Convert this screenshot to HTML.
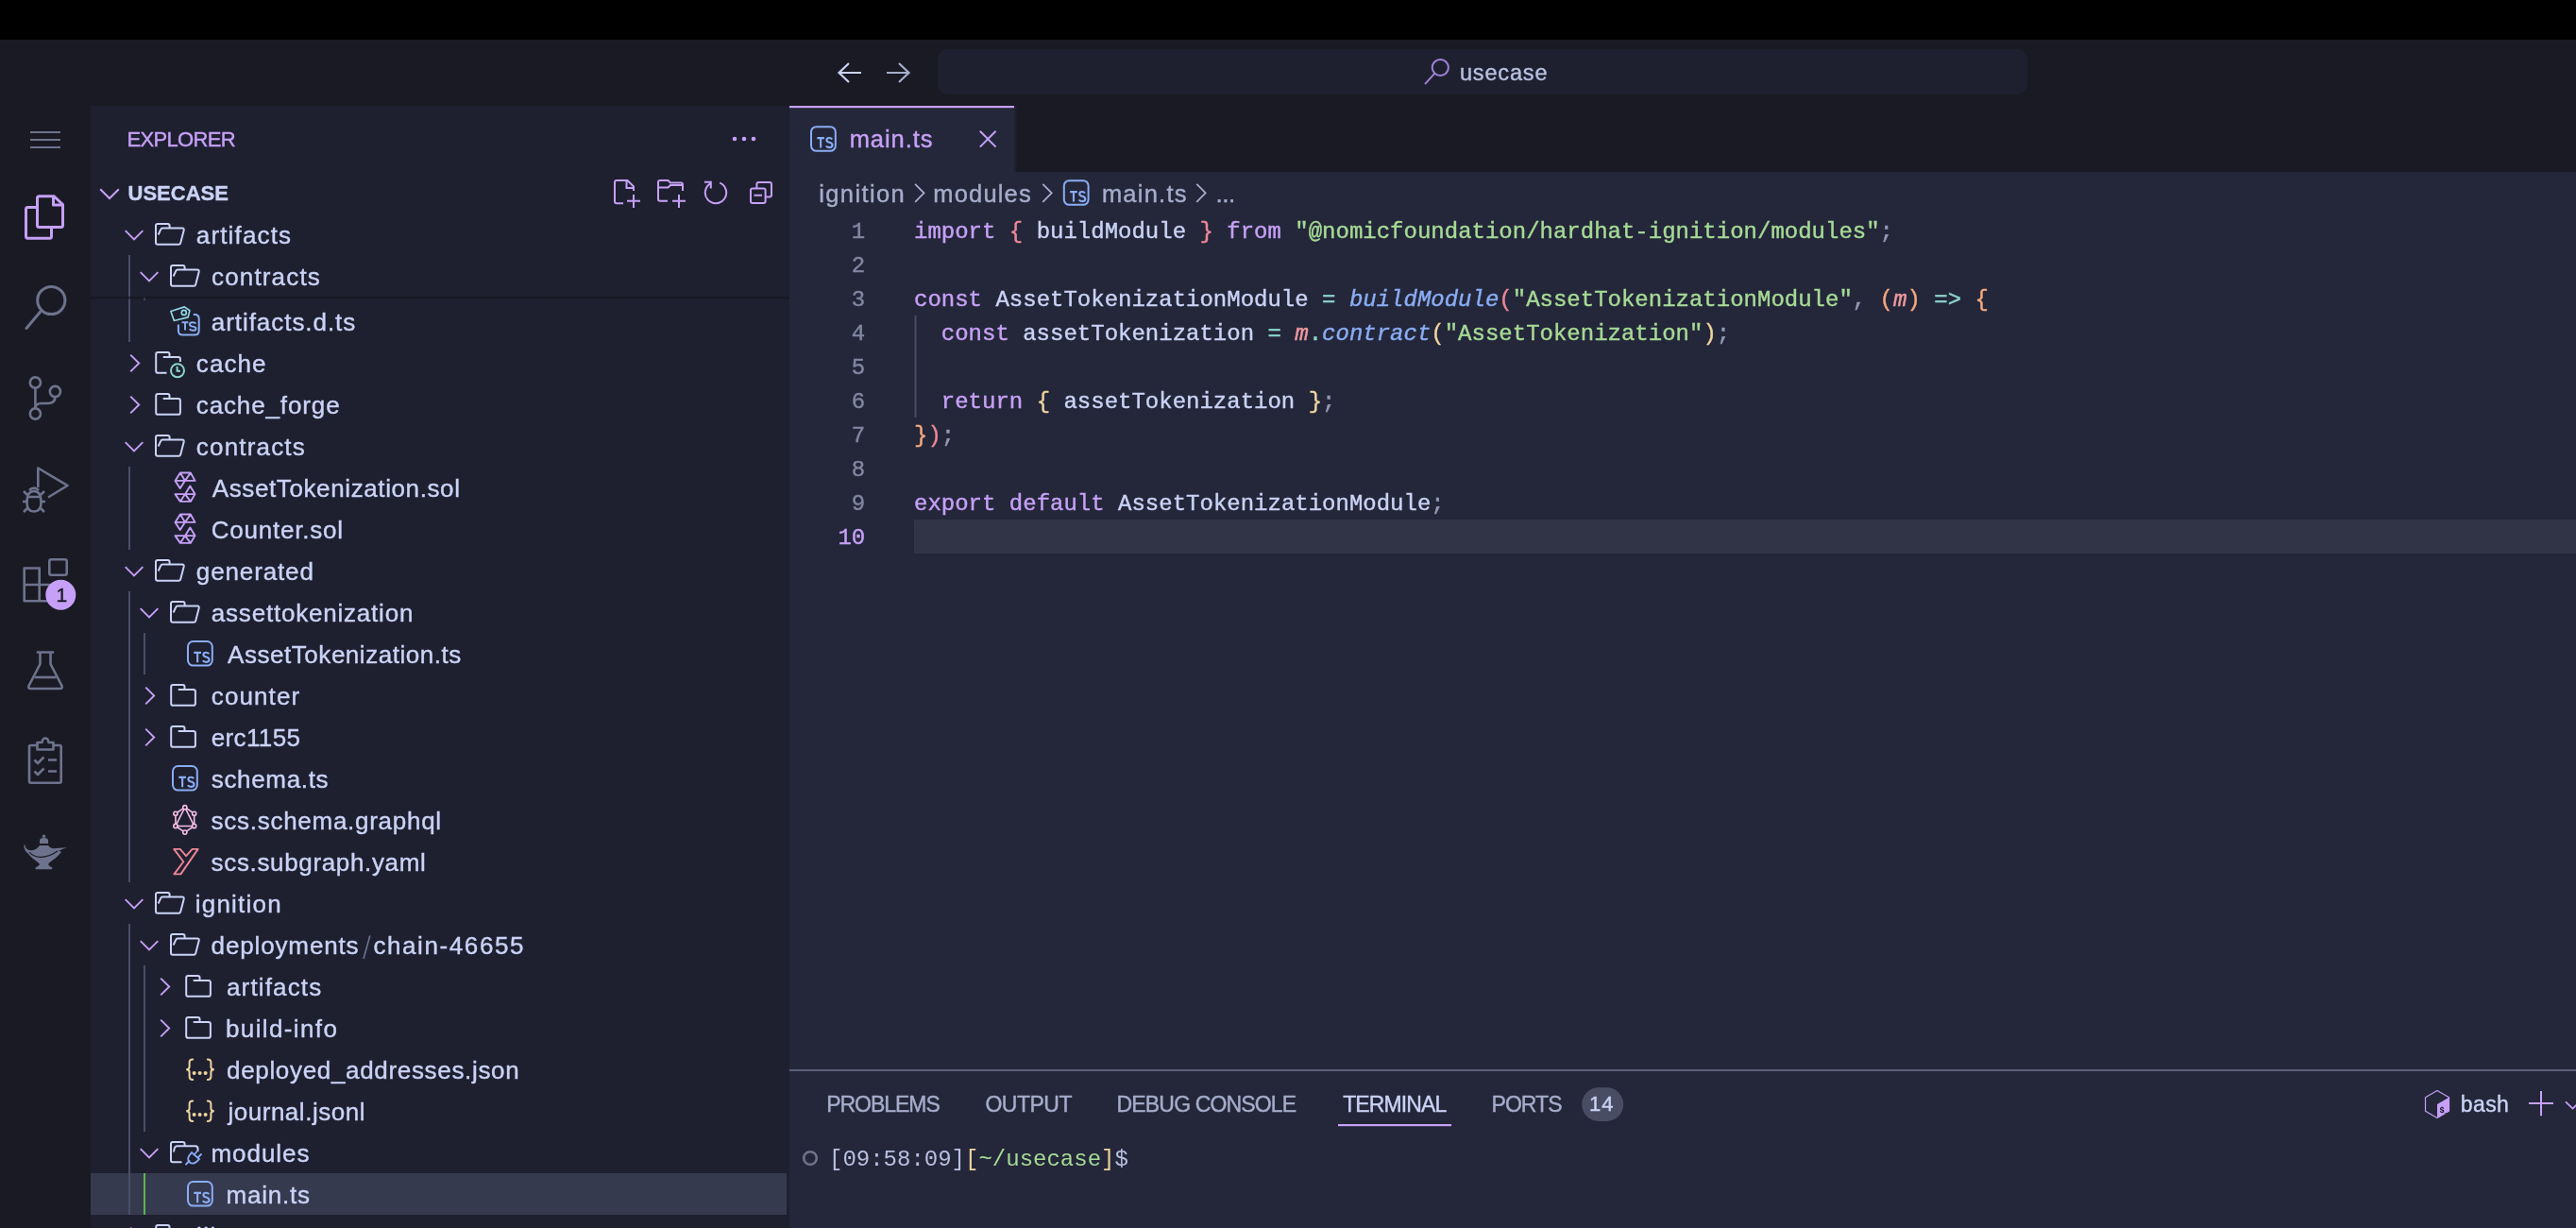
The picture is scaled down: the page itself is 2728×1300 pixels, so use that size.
<!DOCTYPE html>
<html><head><meta charset="utf-8"><title>VS Code</title>
<style>
html,body{margin:0;padding:0;background:#000;overflow:hidden;width:2728px;height:1300px}
svg{display:block;will-change:transform;font-family:"Liberation Sans",sans-serif}
text{white-space:pre;stroke-width:0.4px}
</style></head><body>
<svg width="2728" height="1300" viewBox="0 0 2728 1300">
<rect x="0" y="0" width="2728" height="42" fill="#000"/>
<rect x="0" y="42" width="2728" height="70" fill="#1a1a24"/>
<rect x="0" y="112" width="96" height="1188" fill="#1a1a24"/>
<rect x="96" y="112" width="740" height="1188" fill="#1e2030"/>
<rect x="836" y="112" width="1892" height="70" fill="#1a1a24"/>
<rect x="836" y="112" width="238" height="70" fill="#24273a"/>
<rect x="1074" y="112" width="2.6" height="70" fill="#1e2030"/>
<rect x="836" y="112" width="238" height="2.2" fill="#c6a0f6"/>
<rect x="836" y="182" width="1892" height="1118" fill="#24273a"/>
<rect x="993" y="52" width="1154" height="48" rx="11" fill="#1e2030"/>
<path d="M899 67 L888.5 77 L899 87 M888.5 77 H912" stroke="#cad3f5" stroke-width="2.2" fill="none"/>
<path d="M952 67 L962.5 77 L952 87 M962.5 77 H939" stroke="#a5adcb" stroke-width="2.2" fill="none"/>
<circle cx="1525.3" cy="71.5" r="8.6" stroke="#a383d6" stroke-width="2" fill="none"/>
<path d="M1519.2 77.8 L1509.6 88.4" stroke="#a383d6" stroke-width="2" stroke-linecap="round"/>
<path d="M32 140 H64 M32 148 H64 M32 156 H64" stroke="#6e738d" stroke-width="2"/>
<g stroke="#c6a0f6" stroke-width="3" fill="none" stroke-linejoin="round"><path d="M41.5 207.7 H57 L66.5 216.5 V238.5 Q66.5 240.5 64.5 240.5 H41.5 Q39.5 240.5 39.5 238.5 V209.7 Q39.5 207.7 41.5 207.7 Z"/><path d="M56.5 207.7 V217 H66.5"/><path d="M39.5 219.6 H29.5 Q27.5 219.6 27.5 221.6 V250.3 Q27.5 252.3 29.5 252.3 H52.5 Q54.5 252.3 54.5 250.3 V240.5"/></g>
<g stroke="#6e738d" stroke-width="3" fill="none"><circle cx="54.3" cy="318" r="14.6"/><path d="M44 328.5 L28 347.5" stroke-linecap="round"/></g>
<g stroke="#6e738d" stroke-width="2.6" fill="none"><circle cx="37.4" cy="405" r="5.6"/><circle cx="37.4" cy="438" r="5.6"/><circle cx="58.4" cy="414.5" r="5.6"/><path d="M37.4 410.6 V432.4"/><path d="M58.4 420.1 Q58.4 427 51 427 H44 Q37.4 427 37.4 432"/></g>
<g stroke="#6e738d" stroke-width="2.6" fill="none" stroke-linejoin="round"><path d="M40.3 516 V495.5 L71.5 514 L51 526.5"/><path d="M28.5 532 Q28.5 520 36 520 Q43.5 520 43.5 532 Q43.5 541.5 36 541.5 Q28.5 541.5 28.5 532 Z"/><path d="M28.5 526 H43.5 M24 531 H28.5 M43.5 531 H48 M25 520 L29 524 M47 520 L43 524 M25 542 L29 538 M47 542 L43 538 M31 519 Q36 514 41 519"/></g>
<g stroke="#6e738d" stroke-width="2.6" fill="none" stroke-linejoin="round"><path d="M25.7 601.5 H41.7 V636.3 H25.7 Z M25.7 619 H57 V636.3 H41.7"/><rect x="52.3" y="592.3" width="18.4" height="16.4" rx="2"/></g>
<circle cx="64.3" cy="629.7" r="16" fill="#c6a0f6"/>
<g stroke="#6e738d" stroke-width="2.6" fill="none" stroke-linejoin="round"><path d="M38.8 690.5 H57.2 M42.5 690.5 V703 L30.5 726 Q29.5 729 32.5 729 H63.5 Q66.5 729 65.5 726 L53.5 703 V690.5"/><path d="M36.5 717 H59.5"/></g>
<g stroke="#6e738d" stroke-width="2.6" fill="none" stroke-linejoin="round"><path d="M39.5 789 H32.5 Q31 789 31 790.5 V827 Q31 828.7 32.5 828.7 H63 Q64.7 828.7 64.7 827 V790.5 Q64.7 789 63 789 H56"/><path d="M39.5 793.5 V786 H44.5 Q45 781.5 48 781.5 Q51 781.5 51.5 786 H56.5 V793.5 Z"/><path d="M36.5 804.5 L40 808 L46.5 801.5 M36.5 816.5 L40 820 L46.5 813.5 M51 804.5 H60 M51 816.5 H60"/></g>
<g fill="#6e738d"><circle cx="46.5" cy="885.3" r="1.7"/><path d="M42 893 V889.8 Q42 887.6 44.3 887.3 Q46.5 886.9 48.7 887.3 Q51 887.6 51 889.8 V893 Z"/><path d="M42 894.9 H51 Q52.6 897.6 56 898.3 Q63 897.8 70.9 897.2 Q66.5 898.6 62.5 900.6 L64.9 902.2 Q60 908 53.5 912.3 Q51 913.6 51.2 915.6 Q52.5 917.9 55.2 918.3 V920.2 H37.6 V918.3 Q40.3 917.9 41.8 915.6 Q42 913.6 39.6 912.4 Q33.5 908.8 29.6 903.6 Q25.2 900.4 25.4 894.6 Q26.4 893.6 26.8 895.8 Q27.6 899.6 32 900.3 Q38.6 900 42 894.9 Z"/></g><path d="M31.2 902.3 Q36 907 42.5 907.4 Q52 907.6 61.2 900.8" stroke="#1a1a24" stroke-width="1.1" fill="none"/>
<circle cx="778" cy="147" r="2.3" fill="#c6a0f6"/>
<circle cx="788" cy="147" r="2.3" fill="#c6a0f6"/>
<circle cx="798" cy="147" r="2.3" fill="#c6a0f6"/>
<path d="M106.2 200.3 L116 210 L125.8 200.3" stroke="#c6a0f6" stroke-width="2" fill="none"/>
<g stroke="#c6a0f6" stroke-width="2" fill="none"><path d="M660 215.2 H653 Q651 215.2 651 213.2 V193 Q651 191 653 191 H664.5 L671 197.5 V202 M663.5 191 V199 H671 M671 206 V220 M664 212.8 H678"/><path d="M707 212.8 H699 Q697 212.8 697 210.8 V193 Q697 191 699 191 H707.5 L710 193.5 H721 Q723 193.5 723 195.5 V202 M697 198.5 H707.5 L710 196 H723 M719 206 V220 M712 212.8 H726"/><path d="M762.20 193.62 A11.2 11.2 0 1 1 752.74 194.11 M746 192.8 H752.8 V199.6"/><path d="M801.4 198.4 V195 Q801.4 193 803.4 193 H815 Q817 193 817 195 V206.6 Q817 208.6 815 208.6 H811.6 M797 199.4 H808.6 Q810.6 199.4 810.6 201.4 V213 Q810.6 215 808.6 215 H797 Q795 215 795 213 V201.4 Q795 199.4 797 199.4 Z M798.5 206.8 H807"/></g>
<rect x="96" y="1242" width="737" height="44" fill="#363a4f"/>
<rect x="136" y="270" width="2" height="92" fill="#4a4e66"/>
<rect x="136" y="494" width="2" height="88" fill="#4a4e66"/>
<rect x="136" y="626" width="2" height="308" fill="#4a4e66"/>
<rect x="136" y="978" width="2" height="308" fill="#4a4e66"/>
<rect x="152" y="670" width="2" height="44" fill="#4a4e66"/>
<rect x="152" y="1022" width="2" height="176" fill="#4a4e66"/>
<rect x="152" y="1242" width="2" height="44" fill="#5bb650"/>
<rect x="152" y="314" width="2" height="4" fill="#4a4e66"/>
<g transform="translate(180,318)" fill="none" stroke-linejoin="round"><g stroke="#91d7e3" stroke-width="1.7"><path d="M0.9 11.5 L15.3 6.9 L20.9 10.8 L19.1 17.9 L4.4 21.5 Z"/><circle cx="14.8" cy="12.9" r="2.5"/></g><g stroke="#8aadf4" stroke-width="2"><path d="M8.9 25.4 V32.1 Q8.9 36.6 13.4 36.6 H26.2 Q30.7 36.6 30.7 32.1 V19.5 Q30.7 15 26.2 15 H24.8"/><path d="M12.6 23.3 H19.4 M16 23.3 V31.5" stroke-width="1.9"/><path d="M27.4 24.6 Q26.6 23.2 24.2 23.2 Q20.9 23.2 20.9 25.5 Q20.9 27.2 24.1 27.6 Q27.6 28 27.6 29.9 Q27.6 31.8 24.2 31.8 Q21.6 31.8 20.6 30.3" stroke-width="1.9"/></g></g>
<path d="M138.2 375.6 L147.2 384.5 L138.2 393.4" stroke="#c6a0f6" stroke-width="1.9" fill="none"/>
<g transform="translate(164,362)" stroke="#cad3f5" stroke-width="2" fill="none" stroke-linejoin="round"><path d="M1.2 13.2 Q1.2 11.1 3.3 11.1 H13.5 Q15.5 11.1 15.5 13.1 V15.6"/><path d="M8.7 16 H24.8 Q26.9 16 26.9 18.1 V21 M12.5 32.8 H3.3 Q1.2 32.8 1.2 30.7 V13"/></g><g stroke="#8bd5ca" stroke-width="2" fill="none"><circle cx="188" cy="392.3" r="7"/><path d="M187.6 388 V392.8 H191"/></g>
<path d="M138.2 419.6 L147.2 428.5 L138.2 437.4" stroke="#c6a0f6" stroke-width="1.9" fill="none"/>
<g transform="translate(164,406)" stroke="#cad3f5" stroke-width="2" fill="none" stroke-linejoin="round"><path d="M1.2 13.2 Q1.2 11.1 3.3 11.1 H13.5 Q15.5 11.1 15.5 13.1 V15.6"/><path d="M8.7 16 H24.8 Q26.9 16 26.9 18.1 V30.7 Q26.9 32.8 24.8 32.8 H3.3 Q1.2 32.8 1.2 30.7 V13"/></g>
<path d="M132.7 468.2 L142 477.5 L151.3 468.2" stroke="#c6a0f6" stroke-width="1.9" fill="none"/>
<g transform="translate(164,450)" stroke="#cad3f5" stroke-width="2" fill="none" stroke-linejoin="round"><path d="M1 13 Q1 11 3 11 H13.6 Q15.6 11 15.6 13 V15.3"/><path d="M1 12.5 V30.8 Q1 32.8 3 32.8 H25.3 Q26.8 32.8 27.2 31.3 L30.7 17.8 Q31.1 15.6 29 15.6 H8.2 Q6.6 15.6 6.1 17.1 L3.6 22.5"/></g>
<g transform="translate(180,494)" stroke="#c6a0f6" stroke-width="1.9" fill="none" stroke-linejoin="round"><path d="M10.9 6.5 H21.8 L26.5 14.9 H5.5 Z M10.9 6.5 L16 14.9 L21.8 6.5 M5.5 14.9 L10.7 23.1 L15.8 14.9"/><path d="M5.5 29.1 H26.5 L21.8 36.9 H10.9 Z M10.9 36.9 L16 29.1 L21.8 36.9 M16.2 29.1 L21.3 20.6 L26.5 29.1"/></g>
<g transform="translate(180,538)" stroke="#c6a0f6" stroke-width="1.9" fill="none" stroke-linejoin="round"><path d="M10.9 6.5 H21.8 L26.5 14.9 H5.5 Z M10.9 6.5 L16 14.9 L21.8 6.5 M5.5 14.9 L10.7 23.1 L15.8 14.9"/><path d="M5.5 29.1 H26.5 L21.8 36.9 H10.9 Z M10.9 36.9 L16 29.1 L21.8 36.9 M16.2 29.1 L21.3 20.6 L26.5 29.1"/></g>
<path d="M132.7 600.2 L142 609.5 L151.3 600.2" stroke="#c6a0f6" stroke-width="1.9" fill="none"/>
<g transform="translate(164,582)" stroke="#cad3f5" stroke-width="2" fill="none" stroke-linejoin="round"><path d="M1 13 Q1 11 3 11 H13.6 Q15.6 11 15.6 13 V15.3"/><path d="M1 12.5 V30.8 Q1 32.8 3 32.8 H25.3 Q26.8 32.8 27.2 31.3 L30.7 17.8 Q31.1 15.6 29 15.6 H8.2 Q6.6 15.6 6.1 17.1 L3.6 22.5"/></g>
<path d="M148.7 644.2 L158 653.5 L167.3 644.2" stroke="#c6a0f6" stroke-width="1.9" fill="none"/>
<g transform="translate(180,626)" stroke="#cad3f5" stroke-width="2" fill="none" stroke-linejoin="round"><path d="M1 13 Q1 11 3 11 H13.6 Q15.6 11 15.6 13 V15.3"/><path d="M1 12.5 V30.8 Q1 32.8 3 32.8 H25.3 Q26.8 32.8 27.2 31.3 L30.7 17.8 Q31.1 15.6 29 15.6 H8.2 Q6.6 15.6 6.1 17.1 L3.6 22.5"/></g>
<g transform="translate(198,678)" fill="none" stroke="#8aadf4"><rect x="1" y="1" width="25.8" height="25.6" rx="5.5" stroke-width="2"/><path d="M7.3 12.9 H15 M11.15 12.9 V23.3" stroke-width="2.1"/><path d="M23.2 14.3 Q22.3 12.8 20.2 12.8 Q17.4 12.8 17.4 15.1 Q17.4 17 20.3 17.5 Q23.5 18.1 23.5 20.5 Q23.5 22.9 20.2 22.9 Q17.8 22.9 16.8 21.3" stroke-width="2.1"/></g>
<path d="M154.2 727.6 L163.2 736.5 L154.2 745.4" stroke="#c6a0f6" stroke-width="1.9" fill="none"/>
<g transform="translate(180,714)" stroke="#cad3f5" stroke-width="2" fill="none" stroke-linejoin="round"><path d="M1.2 13.2 Q1.2 11.1 3.3 11.1 H13.5 Q15.5 11.1 15.5 13.1 V15.6"/><path d="M8.7 16 H24.8 Q26.9 16 26.9 18.1 V30.7 Q26.9 32.8 24.8 32.8 H3.3 Q1.2 32.8 1.2 30.7 V13"/></g>
<path d="M154.2 771.6 L163.2 780.5 L154.2 789.4" stroke="#c6a0f6" stroke-width="1.9" fill="none"/>
<g transform="translate(180,758)" stroke="#cad3f5" stroke-width="2" fill="none" stroke-linejoin="round"><path d="M1.2 13.2 Q1.2 11.1 3.3 11.1 H13.5 Q15.5 11.1 15.5 13.1 V15.6"/><path d="M8.7 16 H24.8 Q26.9 16 26.9 18.1 V30.7 Q26.9 32.8 24.8 32.8 H3.3 Q1.2 32.8 1.2 30.7 V13"/></g>
<g transform="translate(182,810)" fill="none" stroke="#8aadf4"><rect x="1" y="1" width="25.8" height="25.6" rx="5.5" stroke-width="2"/><path d="M7.3 12.9 H15 M11.15 12.9 V23.3" stroke-width="2.1"/><path d="M23.2 14.3 Q22.3 12.8 20.2 12.8 Q17.4 12.8 17.4 15.1 Q17.4 17 20.3 17.5 Q23.5 18.1 23.5 20.5 Q23.5 22.9 20.2 22.9 Q17.8 22.9 16.8 21.3" stroke-width="2.1"/></g>
<g transform="translate(180,846)" stroke="#f5bde6" stroke-width="1.6" fill="none"><path d="M15.80 8.70 L25.67 15.30 L25.67 28.50 L15.80 35.10 L5.93 28.50 L5.93 15.30 Z"/><path d="M15.80 8.70 L25.67 28.50 L5.93 28.50 Z"/><circle cx="15.80" cy="8.70" r="2.1" fill="#1e2030"/><circle cx="25.67" cy="15.30" r="2.1" fill="#1e2030"/><circle cx="25.67" cy="28.50" r="2.1" fill="#1e2030"/><circle cx="15.80" cy="35.10" r="2.1" fill="#1e2030"/><circle cx="5.93" cy="28.50" r="2.1" fill="#1e2030"/><circle cx="5.93" cy="15.30" r="2.1" fill="#1e2030"/></g>
<g transform="translate(180,890)" stroke="#ed8796" stroke-width="1.9" fill="none" stroke-linejoin="round"><path d="M4.2 8.9 H10.7 L17.1 16.2 L23.6 8.9 H29.7 L11.4 35.4 H4.4 L14.3 22.3 Z"/></g>
<path d="M132.7 952.2 L142 961.5 L151.3 952.2" stroke="#c6a0f6" stroke-width="1.9" fill="none"/>
<g transform="translate(164,934)" stroke="#cad3f5" stroke-width="2" fill="none" stroke-linejoin="round"><path d="M1 13 Q1 11 3 11 H13.6 Q15.6 11 15.6 13 V15.3"/><path d="M1 12.5 V30.8 Q1 32.8 3 32.8 H25.3 Q26.8 32.8 27.2 31.3 L30.7 17.8 Q31.1 15.6 29 15.6 H8.2 Q6.6 15.6 6.1 17.1 L3.6 22.5"/></g>
<path d="M148.7 996.2 L158 1005.5 L167.3 996.2" stroke="#c6a0f6" stroke-width="1.9" fill="none"/>
<g transform="translate(180,978)" stroke="#cad3f5" stroke-width="2" fill="none" stroke-linejoin="round"><path d="M1 13 Q1 11 3 11 H13.6 Q15.6 11 15.6 13 V15.3"/><path d="M1 12.5 V30.8 Q1 32.8 3 32.8 H25.3 Q26.8 32.8 27.2 31.3 L30.7 17.8 Q31.1 15.6 29 15.6 H8.2 Q6.6 15.6 6.1 17.1 L3.6 22.5"/></g>
<path d="M170.2 1035.6 L179.2 1044.5 L170.2 1053.4" stroke="#c6a0f6" stroke-width="1.9" fill="none"/>
<g transform="translate(196,1022)" stroke="#cad3f5" stroke-width="2" fill="none" stroke-linejoin="round"><path d="M1.2 13.2 Q1.2 11.1 3.3 11.1 H13.5 Q15.5 11.1 15.5 13.1 V15.6"/><path d="M8.7 16 H24.8 Q26.9 16 26.9 18.1 V30.7 Q26.9 32.8 24.8 32.8 H3.3 Q1.2 32.8 1.2 30.7 V13"/></g>
<path d="M170.2 1079.6 L179.2 1088.5 L170.2 1097.4" stroke="#c6a0f6" stroke-width="1.9" fill="none"/>
<g transform="translate(196,1066)" stroke="#cad3f5" stroke-width="2" fill="none" stroke-linejoin="round"><path d="M1.2 13.2 Q1.2 11.1 3.3 11.1 H13.5 Q15.5 11.1 15.5 13.1 V15.6"/><path d="M8.7 16 H24.8 Q26.9 16 26.9 18.1 V30.7 Q26.9 32.8 24.8 32.8 H3.3 Q1.2 32.8 1.2 30.7 V13"/></g>
<g transform="translate(196,1110)" stroke="#eed49f" stroke-width="2" fill="none" stroke-linecap="round"><path d="M8.2 11.4 Q4.6 11.4 4.6 14.8 V19.6 Q4.6 22.3 1.2 22.3 Q4.6 22.3 4.6 25 V29.8 Q4.6 33 8.2 33"/><path d="M23.8 11.4 Q27.4 11.4 27.4 14.8 V19.6 Q27.4 22.3 30.8 22.3 Q27.4 22.3 27.4 25 V29.8 Q27.4 33 23.8 33"/></g><g fill="#eed49f"><circle cx="205.6" cy="1135.9" r="2"/><circle cx="211.6" cy="1135.9" r="2"/><circle cx="217.6" cy="1135.9" r="2"/></g>
<g transform="translate(196,1154)" stroke="#eed49f" stroke-width="2" fill="none" stroke-linecap="round"><path d="M8.2 11.4 Q4.6 11.4 4.6 14.8 V19.6 Q4.6 22.3 1.2 22.3 Q4.6 22.3 4.6 25 V29.8 Q4.6 33 8.2 33"/><path d="M23.8 11.4 Q27.4 11.4 27.4 14.8 V19.6 Q27.4 22.3 30.8 22.3 Q27.4 22.3 27.4 25 V29.8 Q27.4 33 23.8 33"/></g><g fill="#eed49f"><circle cx="205.6" cy="1179.9" r="2"/><circle cx="211.6" cy="1179.9" r="2"/><circle cx="217.6" cy="1179.9" r="2"/></g>
<path d="M148.7 1216.2 L158 1225.5 L167.3 1216.2" stroke="#c6a0f6" stroke-width="1.9" fill="none"/>
<g transform="translate(180,1198)" stroke="#cad3f5" stroke-width="2" fill="none" stroke-linejoin="round"><path d="M1 13 Q1 11 3 11 H13.6 Q15.6 11 15.6 13 V15"/><path d="M12.5 32.3 H3 Q1 32.3 1 30.3 V12.5 M4 21.5 Q4.5 15.2 7.5 15.2 H27 Q29.5 15.2 29.5 17.7 V21"/></g><g stroke="#8aadf4" stroke-width="1.8" fill="none" stroke-linecap="round"><path d="M197 1232.5 L200.5 1229"/><path d="M200 1224 Q198 1228 201 1230.5 Q204 1233 208 1230 L211 1227 L203 1220 Z"/><path d="M206 1222 L209 1218.5 M209.5 1225.5 L213 1222"/></g>
<g transform="translate(198,1250)" fill="none" stroke="#8aadf4"><rect x="1" y="1" width="25.8" height="25.6" rx="5.5" stroke-width="2"/><path d="M7.3 12.9 H15 M11.15 12.9 V23.3" stroke-width="2.1"/><path d="M23.2 14.3 Q22.3 12.8 20.2 12.8 Q17.4 12.8 17.4 15.1 Q17.4 17 20.3 17.5 Q23.5 18.1 23.5 20.5 Q23.5 22.9 20.2 22.9 Q17.8 22.9 16.8 21.3" stroke-width="2.1"/></g>
<path d="M138.2 1299.6 L147.2 1308.5 L138.2 1317.4" stroke="#c6a0f6" stroke-width="1.9" fill="none"/>
<g transform="translate(164,1286)" stroke="#cad3f5" stroke-width="2" fill="none" stroke-linejoin="round"><path d="M1.2 13.2 Q1.2 11.1 3.3 11.1 H13.5 Q15.5 11.1 15.5 13.1 V15.6"/><path d="M8.7 16 H24.8 Q26.9 16 26.9 18.1 V30.7 Q26.9 32.8 24.8 32.8 H3.3 Q1.2 32.8 1.2 30.7 V13"/></g>
<path d="M391.8 990.5 L385 1015" stroke="#6e738d" stroke-width="1.6"/>
<rect x="96" y="226" width="740" height="88" fill="#1e2030"/>
<path d="M132.7 244.2 L142 253.5 L151.3 244.2" stroke="#c6a0f6" stroke-width="1.9" fill="none"/>
<g transform="translate(164,226)" stroke="#cad3f5" stroke-width="2" fill="none" stroke-linejoin="round"><path d="M1 13 Q1 11 3 11 H13.6 Q15.6 11 15.6 13 V15.3"/><path d="M1 12.5 V30.8 Q1 32.8 3 32.8 H25.3 Q26.8 32.8 27.2 31.3 L30.7 17.8 Q31.1 15.6 29 15.6 H8.2 Q6.6 15.6 6.1 17.1 L3.6 22.5"/></g>
<path d="M148.7 288.2 L158 297.5 L167.3 288.2" stroke="#c6a0f6" stroke-width="1.9" fill="none"/>
<g transform="translate(180,270)" stroke="#cad3f5" stroke-width="2" fill="none" stroke-linejoin="round"><path d="M1 13 Q1 11 3 11 H13.6 Q15.6 11 15.6 13 V15.3"/><path d="M1 12.5 V30.8 Q1 32.8 3 32.8 H25.3 Q26.8 32.8 27.2 31.3 L30.7 17.8 Q31.1 15.6 29 15.6 H8.2 Q6.6 15.6 6.1 17.1 L3.6 22.5"/></g>
<rect x="136" y="270" width="2" height="44" fill="#4a4e66"/>
<linearGradient id="shd" x1="0" y1="0" x2="0" y2="1"><stop offset="0" stop-color="#14151f" stop-opacity="0.9"/><stop offset="1" stop-color="#14151f" stop-opacity="0"/></linearGradient>
<rect x="96" y="314" width="740" height="4" fill="url(#shd)"/>
<g transform="translate(858,133.2)" fill="none" stroke="#8aadf4"><rect x="1" y="1" width="25.8" height="25.6" rx="5.5" stroke-width="2"/><path d="M7.3 12.9 H15 M11.15 12.9 V23.3" stroke-width="2.1"/><path d="M23.2 14.3 Q22.3 12.8 20.2 12.8 Q17.4 12.8 17.4 15.1 Q17.4 17 20.3 17.5 Q23.5 18.1 23.5 20.5 Q23.5 22.9 20.2 22.9 Q17.8 22.9 16.8 21.3" stroke-width="2.1"/></g>
<path d="M1037.8 138.8 L1054.6 155.6 M1054.6 138.8 L1037.8 155.6" stroke="#c6a0f6" stroke-width="2" fill="none"/>
<path d="M969.1 194.8 L978.5 204.3 L969.1 213.8" stroke="#a5adcb" stroke-width="1.8" fill="none"/>
<path d="M1104.3 194.8 L1113.7 204.3 L1104.3 213.8" stroke="#a5adcb" stroke-width="1.8" fill="none"/>
<g transform="translate(1125.8,190.2)" fill="none" stroke="#8aadf4"><rect x="1" y="1" width="25.8" height="25.6" rx="5.5" stroke-width="2"/><path d="M7.3 12.9 H15 M11.15 12.9 V23.3" stroke-width="2.1"/><path d="M23.2 14.3 Q22.3 12.8 20.2 12.8 Q17.4 12.8 17.4 15.1 Q17.4 17 20.3 17.5 Q23.5 18.1 23.5 20.5 Q23.5 22.9 20.2 22.9 Q17.8 22.9 16.8 21.3" stroke-width="2.1"/></g>
<path d="M1267.3 194.8 L1276.7 204.3 L1267.3 213.8" stroke="#a5adcb" stroke-width="1.8" fill="none"/>
<rect x="968" y="550" width="1760" height="36" fill="#313446"/>
<rect x="968.5" y="334" width="2" height="108" fill="#494d64"/>
<rect x="836" y="1132" width="1892" height="2" fill="#5b6078"/>
<rect x="1417" y="1190" width="120" height="2.2" fill="#c6a0f6"/>
<rect x="1675.2" y="1151.2" width="44" height="35.7" rx="17.85" fill="#494d64"/>
<circle cx="858" cy="1226" r="6.8" stroke="#6e738d" stroke-width="2.6" fill="none"/>
<text x="878" y="1234" font-family='"Liberation Mono"' font-size="24" xml:space="preserve"><tspan fill="#b8c0e0">[09:58:09]</tspan><tspan fill="#eed49f">[</tspan><tspan fill="#a6da95">~/usecase</tspan><tspan fill="#eed49f">]</tspan><tspan fill="#b8c0e0">$</tspan></text>
<g stroke="#c6a0f6" stroke-width="1.2" fill="none" stroke-linejoin="round"><path d="M2581 1154.5 L2593.5 1161.7 V1176.3 L2581 1183.5 L2568.5 1176.3 V1161.7 Z"/></g>
<path d="M2593.5 1161.7 V1176.3 L2581 1183.5 V1169 Z" fill="#c6a0f6"/>
<text x="2583.5" y="1178" font-family='"Liberation Mono"' font-size="8.5" font-weight="bold" fill="#1a1a24">$_</text>
<path d="M2691 1155 V1181.2 M2678 1168 H2704" stroke="#c6a0f6" stroke-width="2" fill="none"/>
<path d="M2717 1166.3 L2724.5 1173.6 L2732 1166.3" stroke="#c6a0f6" stroke-width="1.8" fill="none"/>
<text x="968.00" y="252" font-family='"Liberation Mono"' font-size="24" xml:space="preserve"><tspan fill="#c6a0f6" stroke="#c6a0f6">import</tspan><tspan fill="#cad3f5" stroke="#cad3f5"> </tspan><tspan fill="#ed8796" stroke="#ed8796">{</tspan><tspan fill="#cad3f5" stroke="#cad3f5"> buildModule </tspan><tspan fill="#ed8796" stroke="#ed8796">}</tspan><tspan fill="#cad3f5" stroke="#cad3f5"> </tspan><tspan fill="#c6a0f6" stroke="#c6a0f6">from</tspan><tspan fill="#cad3f5" stroke="#cad3f5"> </tspan><tspan fill="#a6da95" stroke="#a6da95">"@nomicfoundation/hardhat-ignition/modules"</tspan><tspan fill="#939ab7" stroke="#939ab7">;</tspan></text>
<text x="968.00" y="324" font-family='"Liberation Mono"' font-size="24" xml:space="preserve"><tspan fill="#c6a0f6" stroke="#c6a0f6">const</tspan><tspan fill="#cad3f5" stroke="#cad3f5"> AssetTokenizationModule </tspan><tspan fill="#8bd5ca" stroke="#8bd5ca">=</tspan><tspan fill="#cad3f5" stroke="#cad3f5"> </tspan><tspan fill="#8aadf4" stroke="#8aadf4" font-style="italic">buildModule</tspan><tspan fill="#ed8796" stroke="#ed8796">(</tspan><tspan fill="#a6da95" stroke="#a6da95">"AssetTokenizationModule"</tspan><tspan fill="#939ab7" stroke="#939ab7">,</tspan><tspan fill="#cad3f5" stroke="#cad3f5"> </tspan><tspan fill="#f5a97f" stroke="#f5a97f">(</tspan><tspan fill="#ee99a0" stroke="#ee99a0" font-style="italic">m</tspan><tspan fill="#f5a97f" stroke="#f5a97f">)</tspan><tspan fill="#cad3f5" stroke="#cad3f5"> </tspan><tspan fill="#8bd5ca" stroke="#8bd5ca">=&gt;</tspan><tspan fill="#cad3f5" stroke="#cad3f5"> </tspan><tspan fill="#f5a97f" stroke="#f5a97f">{</tspan></text>
<text x="996.80" y="360" font-family='"Liberation Mono"' font-size="24" xml:space="preserve"><tspan fill="#c6a0f6" stroke="#c6a0f6">const</tspan><tspan fill="#cad3f5" stroke="#cad3f5"> assetTokenization </tspan><tspan fill="#8bd5ca" stroke="#8bd5ca">=</tspan><tspan fill="#cad3f5" stroke="#cad3f5"> </tspan><tspan fill="#ee99a0" stroke="#ee99a0" font-style="italic">m</tspan><tspan fill="#8bd5ca" stroke="#8bd5ca">.</tspan><tspan fill="#8aadf4" stroke="#8aadf4" font-style="italic">contract</tspan><tspan fill="#eed49f" stroke="#eed49f">(</tspan><tspan fill="#a6da95" stroke="#a6da95">"AssetTokenization"</tspan><tspan fill="#eed49f" stroke="#eed49f">)</tspan><tspan fill="#939ab7" stroke="#939ab7">;</tspan></text>
<text x="996.80" y="432" font-family='"Liberation Mono"' font-size="24" xml:space="preserve"><tspan fill="#c6a0f6" stroke="#c6a0f6">return</tspan><tspan fill="#cad3f5" stroke="#cad3f5"> </tspan><tspan fill="#eed49f" stroke="#eed49f">{</tspan><tspan fill="#cad3f5" stroke="#cad3f5"> assetTokenization </tspan><tspan fill="#eed49f" stroke="#eed49f">}</tspan><tspan fill="#939ab7" stroke="#939ab7">;</tspan></text>
<text x="968.00" y="468" font-family='"Liberation Mono"' font-size="24" xml:space="preserve"><tspan fill="#f5a97f" stroke="#f5a97f">}</tspan><tspan fill="#ed8796" stroke="#ed8796">)</tspan><tspan fill="#939ab7" stroke="#939ab7">;</tspan></text>
<text x="968.00" y="540" font-family='"Liberation Mono"' font-size="24" xml:space="preserve"><tspan fill="#c6a0f6" stroke="#c6a0f6">export</tspan><tspan fill="#cad3f5" stroke="#cad3f5"> </tspan><tspan fill="#c6a0f6" stroke="#c6a0f6">default</tspan><tspan fill="#cad3f5" stroke="#cad3f5"> AssetTokenizationModule</tspan><tspan fill="#939ab7" stroke="#939ab7">;</tspan></text>
<text x="1545.90" y="84.90" fill="#b8c0e0" stroke="#b8c0e0" font-size="23.5" letter-spacing="0.850">usecase</text>
<text x="59.60" y="637.30" fill="#1a1a24" stroke="#1a1a24" font-size="21" stroke-width="0.9">1</text>
<text x="134.50" y="155.00" fill="#c6a0f6" stroke="#c6a0f6" font-size="22" letter-spacing="-0.671" stroke-width="0.2">EXPLORER</text>
<text x="135.50" y="212.00" fill="#cad3f5" stroke="#cad3f5" font-size="22" font-weight="bold" letter-spacing="0.017">USECASE</text>
<text x="223.80" y="349.80" fill="#cad3f5" stroke="#cad3f5" font-size="26" letter-spacing="0.946">artifacts.d.ts</text>
<text x="207.80" y="393.80" fill="#cad3f5" stroke="#cad3f5" font-size="26" letter-spacing="1.100">cache</text>
<text x="207.80" y="437.80" fill="#cad3f5" stroke="#cad3f5" font-size="26" letter-spacing="0.870">cache_forge</text>
<text x="207.80" y="481.80" fill="#cad3f5" stroke="#cad3f5" font-size="26" letter-spacing="1.188">contracts</text>
<text x="224.80" y="525.80" fill="#cad3f5" stroke="#cad3f5" font-size="26" letter-spacing="0.605">AssetTokenization.sol</text>
<text x="223.80" y="569.80" fill="#cad3f5" stroke="#cad3f5" font-size="26" letter-spacing="0.760">Counter.sol</text>
<text x="207.80" y="613.80" fill="#cad3f5" stroke="#cad3f5" font-size="26" letter-spacing="0.875">generated</text>
<text x="223.80" y="657.80" fill="#cad3f5" stroke="#cad3f5" font-size="26" letter-spacing="0.794">assettokenization</text>
<text x="241.10" y="701.80" fill="#cad3f5" stroke="#cad3f5" font-size="26" letter-spacing="0.537">AssetTokenization.ts</text>
<text x="223.80" y="745.80" fill="#cad3f5" stroke="#cad3f5" font-size="26" letter-spacing="1.100">counter</text>
<text x="223.80" y="789.80" fill="#cad3f5" stroke="#cad3f5" font-size="26" letter-spacing="0.350">erc1155</text>
<text x="223.80" y="833.80" fill="#cad3f5" stroke="#cad3f5" font-size="26" letter-spacing="0.662">schema.ts</text>
<text x="223.60" y="877.80" fill="#cad3f5" stroke="#cad3f5" font-size="26" letter-spacing="0.724">scs.schema.graphql</text>
<text x="223.60" y="921.80" fill="#cad3f5" stroke="#cad3f5" font-size="26" letter-spacing="0.650">scs.subgraph.yaml</text>
<text x="206.70" y="965.80" fill="#cad3f5" stroke="#cad3f5" font-size="26" letter-spacing="1.229">ignition</text>
<text x="240.00" y="1053.80" fill="#cad3f5" stroke="#cad3f5" font-size="26" letter-spacing="1.150">artifacts</text>
<text x="239.00" y="1097.80" fill="#cad3f5" stroke="#cad3f5" font-size="26" letter-spacing="1.378">build-info</text>
<text x="240.00" y="1141.80" fill="#cad3f5" stroke="#cad3f5" font-size="26" letter-spacing="0.673">deployed_addresses.json</text>
<text x="241.40" y="1185.80" fill="#cad3f5" stroke="#cad3f5" font-size="26" letter-spacing="0.533">journal.jsonl</text>
<text x="223.50" y="1229.80" fill="#cad3f5" stroke="#cad3f5" font-size="26" letter-spacing="0.950">modules</text>
<text x="239.60" y="1273.80" fill="#cad3f5" stroke="#cad3f5" font-size="26" letter-spacing="0.767">main.ts</text>
<text x="208.00" y="1317.80" fill="#cad3f5" stroke="#cad3f5" font-size="26" letter-spacing="1.500">lib</text>
<text x="223.60" y="1009.80" fill="#cad3f5" stroke="#cad3f5" font-size="26" letter-spacing="0.860">deployments</text>
<text x="395.40" y="1009.80" fill="#cad3f5" stroke="#cad3f5" font-size="26" letter-spacing="1.600">chain-46655</text>
<text x="207.80" y="257.80" fill="#cad3f5" stroke="#cad3f5" font-size="26" letter-spacing="1.150">artifacts</text>
<text x="224.00" y="301.80" fill="#cad3f5" stroke="#cad3f5" font-size="26" letter-spacing="1.162">contracts</text>
<text x="899.70" y="156.30" fill="#c6a0f6" stroke="#c6a0f6" font-size="25.5" letter-spacing="0.933">main.ts</text>
<text x="867.20" y="214.00" fill="#a5adcb" stroke="#a5adcb" font-size="25.5" letter-spacing="1.400">ignition</text>
<text x="988.30" y="214.00" fill="#a5adcb" stroke="#a5adcb" font-size="25.5" letter-spacing="1.167">modules</text>
<text x="1166.90" y="214.00" fill="#a5adcb" stroke="#a5adcb" font-size="25.5" letter-spacing="1.233">main.ts</text>
<text x="1287.50" y="214.00" fill="#a5adcb" stroke="#a5adcb" font-size="26" letter-spacing="-0.500">...</text>
<text x="916.20" y="252.00" fill="#8087a2" stroke="#8087a2" font-size="24" font-family='"Liberation Mono"' text-anchor="end">1</text>
<text x="916.20" y="288.00" fill="#8087a2" stroke="#8087a2" font-size="24" font-family='"Liberation Mono"' text-anchor="end">2</text>
<text x="916.20" y="324.00" fill="#8087a2" stroke="#8087a2" font-size="24" font-family='"Liberation Mono"' text-anchor="end">3</text>
<text x="916.20" y="360.00" fill="#8087a2" stroke="#8087a2" font-size="24" font-family='"Liberation Mono"' text-anchor="end">4</text>
<text x="916.20" y="396.00" fill="#8087a2" stroke="#8087a2" font-size="24" font-family='"Liberation Mono"' text-anchor="end">5</text>
<text x="916.20" y="432.00" fill="#8087a2" stroke="#8087a2" font-size="24" font-family='"Liberation Mono"' text-anchor="end">6</text>
<text x="916.20" y="468.00" fill="#8087a2" stroke="#8087a2" font-size="24" font-family='"Liberation Mono"' text-anchor="end">7</text>
<text x="916.20" y="504.00" fill="#8087a2" stroke="#8087a2" font-size="24" font-family='"Liberation Mono"' text-anchor="end">8</text>
<text x="916.20" y="540.00" fill="#8087a2" stroke="#8087a2" font-size="24" font-family='"Liberation Mono"' text-anchor="end">9</text>
<text x="916.20" y="576.00" fill="#c6a0f6" stroke="#c6a0f6" font-size="24" font-family='"Liberation Mono"' text-anchor="end">10</text>
<text x="875.20" y="1177.30" fill="#a5adcb" stroke="#a5adcb" font-size="23" letter-spacing="-1.029" stroke-width="0.15">PROBLEMS</text>
<text x="1043.50" y="1177.30" fill="#a5adcb" stroke="#a5adcb" font-size="23" letter-spacing="-0.520" stroke-width="0.15">OUTPUT</text>
<text x="1182.60" y="1177.30" fill="#a5adcb" stroke="#a5adcb" font-size="23" letter-spacing="-0.842" stroke-width="0.15">DEBUG CONSOLE</text>
<text x="1422.20" y="1177.30" fill="#cad3f5" stroke="#cad3f5" font-size="23" letter-spacing="-0.886" stroke-width="0.15">TERMINAL</text>
<text x="1579.50" y="1177.30" fill="#a5adcb" stroke="#a5adcb" font-size="23" letter-spacing="-0.950" stroke-width="0.15">PORTS</text>
<text x="1683.00" y="1176.00" fill="#cad3f5" stroke="#cad3f5" font-size="22" letter-spacing="1.000">14</text>
<text x="2605.80" y="1177.20" fill="#cad3f5" stroke="#cad3f5" font-size="23" letter-spacing="0.400">bash</text>
</svg>
</body></html>
